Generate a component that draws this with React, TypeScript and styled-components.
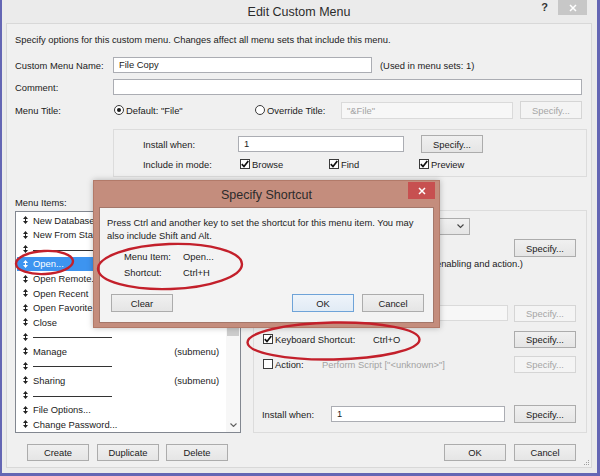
import React from 'react';
import styled, { createGlobalStyle, css } from 'styled-components';

const GlobalStyle = createGlobalStyle`
  * { box-sizing: border-box; }
  html, body { margin: 0; padding: 0; background: #ebebeb; }
  body {
    font-family: "Liberation Sans", Arial, sans-serif;
    font-size: 9.4px;
    color: #1b1b1b;
  }
`;

const Stage = styled.div`
  position: relative;
  width: 600px;
  height: 476px;
  overflow: hidden;
`;

const Window = styled.div`
  width: 600px;
  height: 476px;
  background: #ebebeb;
  border-left: 2px solid #6466b4;
  border-right: 3px solid #6466b4;
  border-bottom: 3px solid #6466b4;
  padding: 0 5px 5px 4px;
  display: flex;
  flex-direction: column;
`;

const TitleBar = styled.div`
  height: 23px;
  flex: none;
  display: grid;
  grid-template-columns: 1fr auto 1fr;
  align-items: start;
`;

const TitleText = styled.div<{ $h: number }>`
  grid-column: 2;
  font-size: 12.5px;
  line-height: ${p => p.$h}px;
  color: #2b2b2b;
  white-space: nowrap;
`;

const Caption = styled.div<{ $mr: number; $mt: number }>`
  justify-self: end;
  display: flex;
  align-items: flex-start;
  margin-right: ${p => p.$mr}px;
  margin-top: ${p => p.$mt}px;
`;

const HelpGlyph = styled.span`
  font-weight: bold;
  font-size: 11px;
  line-height: 14px;
  color: #333;
  margin-right: 10px;
`;

const CloseBox = styled.div<{ $w: number; $h: number; $bg: string }>`
  width: ${p => p.$w}px;
  height: ${p => p.$h}px;
  background: ${p => p.$bg};
  display: flex;
  align-items: center;
  justify-content: center;
`;

const Client = styled.div`
  flex: 1;
  position: relative;
  background: #f0f0f0;
  border: 1px solid #d8d8d8;
  padding: 9px 4px 0 8px;
  display: flex;
  flex-direction: column;
`;

const Intro = styled.div`
  line-height: 13px;
  white-space: nowrap;
`;

const FormGrid = styled.div`
  margin-top: 11px;
  display: grid;
  grid-template-columns: 98px 1fr;
  row-gap: 6px;
  align-items: center;
`;

const FieldLabel = styled.div<{ $w?: number }>`
  line-height: 13px;
  white-space: nowrap;
  ${p => p.$w && css`width: ${p.$w}px; flex: none;`}
`;

const FieldRow = styled.div`
  display: flex;
  align-items: center;
  margin-right: 5px;
`;

const Note = styled.span`
  margin-left: 8px;
  white-space: nowrap;
`;

const TextBox = styled.div<{ $w?: number; $h?: number; $disabled?: boolean; $mr?: number }>`
  height: ${p => p.$h ?? 16}px;
  ${p => (p.$w ? css`width: ${p.$w}px; flex: none;` : css`flex: 1;`)}
  margin-right: ${p => p.$mr ?? 0}px;
  background: ${p => (p.$disabled ? '#f7f7f7' : '#fff')};
  border: 1px solid ${p => (p.$disabled ? '#dadada' : '#abadb3')};
  color: ${p => (p.$disabled ? '#a3a3a3' : '#1b1b1b')};
  padding: 0 5px;
  line-height: ${p => (p.$h ?? 16) - 2}px;
  white-space: nowrap;
  overflow: hidden;
`;

const Btn = styled.button<{ $h?: number; $disabled?: boolean; $default?: boolean; $ml?: number }>`
  font: inherit;
  width: 62px;
  height: ${p => p.$h ?? 18}px;
  flex: none;
  margin: 0 0 0 ${p => p.$ml ?? 0}px;
  padding: 0;
  display: flex;
  align-items: center;
  justify-content: center;
  border: 1px solid #acacac;
  background: linear-gradient(#f0f0f0, #e5e5e5);
  color: #1b1b1b;
  ${p =>
    p.$disabled &&
    css`
      border-color: #d5d5d5;
      background: #f4f4f4;
      color: #a6a6a6;
    `}
  ${p =>
    p.$default &&
    css`
      border-color: #6ea3d8;
      background: linear-gradient(#eef4fa, #e1ebf5);
    `}
`;

const RadioOption = styled.div<{ $w?: number }>`
  display: flex;
  align-items: center;
  gap: 2px;
  white-space: nowrap;
  ${p => p.$w && css`width: ${p.$w}px; flex: none;`}
`;

const RadioDot = styled.span<{ $on?: boolean }>`
  width: 10px;
  height: 10px;
  margin-left: 1px;
  border-radius: 50%;
  border: 1px solid #3a3a3a;
  background: #fff;
  flex: none;
  display: flex;
  align-items: center;
  justify-content: center;
  ${p =>
    p.$on &&
    css`
      &::after {
        content: '';
        width: 4px;
        height: 4px;
        border-radius: 50%;
        background: #1b1b1b;
      }
    `}
`;

const CheckBoxBox = styled.span`
  width: 10px;
  height: 10px;
  border: 1px solid #3a3a3a;
  background: #fff;
  flex: none;
  display: flex;
  align-items: center;
  justify-content: center;
`;

const CheckOption = styled.div<{ $w?: number; $ml?: number }>`
  display: flex;
  align-items: center;
  gap: 2px;
  white-space: nowrap;
  margin-left: ${p => p.$ml ?? 0}px;
  ${p => p.$w && css`width: ${p.$w}px; flex: none;`}
`;

const GroupBox = styled.div`
  grid-column: 2;
  margin-top: 4px;
  border: 1px solid #dcdcdc;
  padding: 5px 4px 5px 29px;
`;

const GroupRow = styled.div<{ $mt?: number; $h: number }>`
  display: flex;
  align-items: center;
  height: ${p => p.$h}px;
  margin-top: ${p => p.$mt ?? 0}px;
`;

const Lower = styled.div`
  margin-top: 19px;
  display: grid;
  grid-template-columns: 226px 334px;
  grid-template-rows: 13px 222px;
  column-gap: 12px;
  row-gap: 2px;
`;

const ListBox = styled.div`
  grid-column: 1;
  grid-row: 2;
  border: 1px solid #828790;
  background: #fff;
  display: flex;
`;

const ListItems = styled.div`
  flex: 1;
  padding-top: 1px;
  overflow: hidden;
`;

const ListItem = styled.div<{ $selected?: boolean }>`
  height: 14.57px;
  margin-left: 1px;
  padding: 0 7px 0 6px;
  display: flex;
  align-items: center;
  white-space: nowrap;
  ${p =>
    p.$selected &&
    css`
      background: #3d94f0;
      color: #fff;
    `}
`;

const ItemName = styled.span`
  flex: 1;
  margin-left: 5px;
`;

const SepLine = styled.span`
  width: 79px;
  height: 1px;
  margin-left: 5px;
  margin-top: 2px;
  background: #333;
`;

const ScrollBar = styled.div`
  width: 14px;
  flex: none;
  background: #f7f7f7;
  display: flex;
  flex-direction: column;
  align-items: center;
`;

const ScrollArrow = styled.div`
  height: 14px;
  width: 14px;
  display: flex;
  align-items: center;
  justify-content: center;
`;

const Thumb = styled.div`
  margin-top: 40px;
  width: 12px;
  height: 70px;
  background: #cdcdcd;
`;

const ScrollFill = styled.div`
  flex: 1;
`;

const Panel = styled.div`
  grid-column: 2;
  grid-row: 2;
  margin-top: -1px;
  border: 1px solid #dcdcdc;
  padding: 7px 10px 8px 8px;
  display: flex;
  flex-direction: column;
`;

const PanelRow = styled.div<{ $mt: number; $h: number }>`
  display: flex;
  align-items: center;
  height: ${p => p.$h}px;
  margin-top: ${p => p.$mt}px;
  white-space: nowrap;
`;

const Spacer = styled.div`
  flex: 1;
`;

const Muted = styled.span`
  color: #a3a3a3;
`;

const ComboBox = styled.div<{ $w: number }>`
  width: ${p => p.$w}px;
  height: 17px;
  border: 1px solid #acacac;
  background: linear-gradient(#f0f0f0, #e5e5e5);
  padding: 0 5px;
  display: flex;
  align-items: center;
  justify-content: flex-end;
`;

const PanelNote = styled.div<{ $pl: number }>`
  line-height: 13px;
  padding-left: ${p => p.$pl}px;
  white-space: nowrap;
`;

const ButtonBar = styled.div`
  margin-top: 11px;
  height: 17px;
  display: flex;
  align-items: center;
  padding: 0 11px 0 12px;
`;

const Grip = styled.svg`
  position: absolute;
  right: 1px;
  bottom: 1px;
`;

/* ---------- Specify Shortcut dialog (floats over the window) ---------- */

const Dialog = styled.div`
  position: absolute;
  left: 93px;
  top: 180px;
  width: 347px;
  height: 148px;
  background: #c48d7d;
  border: 1px solid #b27a69;
  padding: 0 5px 4px 5px;
  display: flex;
  flex-direction: column;
  box-shadow: 0 0 6px rgba(0, 0, 0, 0.25);
`;

const DialogTitleBar = styled.div`
  height: 26px;
  flex: none;
  display: grid;
  grid-template-columns: 1fr auto 1fr;
  align-items: start;
`;

const DialogBody = styled.div`
  flex: 1;
  background: #f3f3f3;
  border: 1px solid #a4776a;
  padding: 8px 9px 0 7px;
  display: flex;
  flex-direction: column;
`;

const BodyText = styled.div`
  line-height: 13px;
  white-space: nowrap;
`;

const InfoGrid = styled.div`
  margin: 6px 0 0 17px;
  display: grid;
  grid-template-columns: 59px auto;
  grid-auto-rows: 16px;
  align-items: center;
`;

const DialogButtons = styled.div`
  margin-top: 14px;
  display: flex;
  align-items: center;
  padding-left: 4px;
`;

const Marks = styled.svg`
  position: absolute;
  left: 0;
  top: 0;
  pointer-events: none;
`;

/* ---------- small drawings ---------- */

const Check = ({ on }: { on?: boolean }) => (
  <CheckBoxBox>
    {on && (
      <svg width="8" height="8" viewBox="0 0 8 8">
        <path d="M0.8 4.1 L3 6.5 L7.3 1" fill="none" stroke="#111" strokeWidth="1.7" />
      </svg>
    )}
  </CheckBoxBox>
);

const DragHandle = ({ color }: { color: string }) => (
  <svg width="5" height="8" viewBox="0 0 5 8">
    <path d="M2.5 0 L5 3 H0 Z M0 5 H5 L2.5 8 Z" fill={color} />
    <rect x="2" y="2" width="1" height="4" fill={color} />
  </svg>
);

const Chevron = ({ size = 7, color = '#444' }: { size?: number; color?: string }) => (
  <svg width={size} height={size * 0.6} viewBox="0 0 7 4.2">
    <path d="M0.5 0.5 L3.5 3.5 L6.5 0.5" fill="none" stroke={color} strokeWidth="1.1" />
  </svg>
);

const CrossGlyph = () => (
  <svg width="8" height="8" viewBox="0 0 8 8">
    <path d="M1 1 L7 7 M7 1 L1 7" stroke="#fff" strokeWidth="1.5" />
  </svg>
);

type MenuRow = { name?: string; sub?: boolean; sep?: boolean; selected?: boolean };

const menuRows: MenuRow[] = [
  { name: 'New Database...' },
  { name: 'New From Starter Solution...' },
  { sep: true },
  { name: 'Open...', selected: true },
  { name: 'Open Remote...' },
  { name: 'Open Recent', sub: true },
  { name: 'Open Favorite', sub: true },
  { name: 'Close' },
  { sep: true },
  { name: 'Manage', sub: true },
  { sep: true },
  { name: 'Sharing', sub: true },
  { sep: true },
  { name: 'File Options...' },
  { name: 'Change Password...' },
];

export default function App() {
  return (
    <Stage>
      <GlobalStyle />
      <Window>
        <TitleBar>
          <TitleText $h={24}>Edit Custom Menu</TitleText>
          <Caption $mr={5} $mt={0}>
            <HelpGlyph>?</HelpGlyph>
            <CloseBox $w={29} $h={15} $bg="#c7c7c7">
              <CrossGlyph />
            </CloseBox>
          </Caption>
        </TitleBar>

        <Client>
          <Intro>
            Specify options for this custom menu. Changes affect all menu sets that include this menu.
          </Intro>

          <FormGrid>
            <FieldLabel>Custom Menu Name:</FieldLabel>
            <FieldRow>
              <TextBox $w={259}>File Copy</TextBox>
              <Note>(Used in menu sets: 1)</Note>
            </FieldRow>

            <FieldLabel>Comment:</FieldLabel>
            <FieldRow>
              <TextBox />
            </FieldRow>

            <FieldLabel>Menu Title:</FieldLabel>
            <FieldRow>
              <RadioOption $w={141}>
                <RadioDot $on />
                Default: "File"
              </RadioOption>
              <RadioOption $w={87}>
                <RadioDot />
                Override Title:
              </RadioOption>
              <TextBox $w={172} $h={17} $disabled $mr={7}>
                "&amp;File"
              </TextBox>
              <Btn $disabled $h={18}>
                Specify...
              </Btn>
            </FieldRow>

            <GroupBox>
              <GroupRow $h={18}>
                <FieldLabel $w={95}>Install when:</FieldLabel>
                <TextBox $w={166} $mr={17}>
                  1
                </TextBox>
                <Btn>Specify...</Btn>
              </GroupRow>
              <GroupRow $h={14} $mt={4}>
                <FieldLabel $w={97}>Include in mode:</FieldLabel>
                <CheckOption $w={89}>
                  <Check on />
                  Browse
                </CheckOption>
                <CheckOption $w={90}>
                  <Check on />
                  Find
                </CheckOption>
                <CheckOption>
                  <Check on />
                  Preview
                </CheckOption>
              </GroupRow>
            </GroupBox>
          </FormGrid>

          <Lower>
            <FieldLabel>Menu Items:</FieldLabel>
            <ListBox>
              <ListItems>
                {menuRows.map((row, i) => (
                  <ListItem key={i} $selected={row.selected}>
                    <DragHandle color={row.selected ? '#fff' : '#222'} />
                    {row.sep ? <SepLine /> : <ItemName>{row.name}</ItemName>}
                    {row.sub && <span>(submenu)</span>}
                  </ListItem>
                ))}
              </ListItems>
              <ScrollBar>
                <ScrollArrow>
                  <svg width="7" height="4.2" viewBox="0 0 7 4.2">
                    <path d="M0.5 3.7 L3.5 0.7 L6.5 3.7" fill="none" stroke="#606060" strokeWidth="1.1" />
                  </svg>
                </ScrollArrow>
                <Thumb />
                <ScrollFill />
                <ScrollArrow>
                  <Chevron color="#606060" />
                </ScrollArrow>
              </ScrollBar>
            </ListBox>

            <Panel>
              {/* rows whose left part sits under the Specify Shortcut dialog */}
              <PanelRow $mt={0} $h={17}>
                <FieldLabel $w={69} />
                <ComboBox $w={139}>
                  <Chevron />
                </ComboBox>
              </PanelRow>
              <PanelRow $mt={4} $h={18}>
                <Spacer />
                <Btn>Specify...</Btn>
              </PanelRow>
              <PanelNote $pl={27}>(Command determines item name, enabling and action.)</PanelNote>
              <PanelRow $mt={34.5} $h={17}>
                <CheckOption $w={68} $ml={1}>
                  <Check />
                </CheckOption>
                <TextBox $disabled $mr={6} />
                <Btn $disabled $h={17}>
                  Specify...
                </Btn>
              </PanelRow>
              <PanelRow $mt={9} $h={17}>
                <CheckOption $w={110} $ml={1}>
                  <Check on />
                  Keyboard Shortcut:
                </CheckOption>
                Ctrl+O
                <Spacer />
                <Btn $h={17}>Specify...</Btn>
              </PanelRow>
              <PanelRow $mt={8} $h={17}>
                <CheckOption $w={59} $ml={1}>
                  <Check />
                  Action:
                </CheckOption>
                <Muted>Perform Script ["&lt;unknown&gt;"]</Muted>
                <Spacer />
                <Btn $disabled $h={17}>
                  Specify...
                </Btn>
              </PanelRow>
              <PanelRow $mt={33} $h={17}>
                <FieldLabel $w={69}>Install when:</FieldLabel>
                <TextBox $mr={9}>1</TextBox>
                <Btn $h={18}>Specify...</Btn>
              </PanelRow>
            </Panel>
          </Lower>

          <ButtonBar>
            <Btn $h={17}>Create</Btn>
            <Btn $h={17} $ml={8}>
              Duplicate
            </Btn>
            <Btn $h={17} $ml={7}>
              Delete
            </Btn>
            <Spacer />
            <Btn $h={17}>OK</Btn>
            <Btn $h={17} $ml={8}>
              Cancel
            </Btn>
          </ButtonBar>

          <Grip width="6" height="6" viewBox="0 0 6 6">
            <rect x="4" y="0" width="1" height="1" fill="#a0a0a0" />
            <rect x="2" y="2" width="1" height="1" fill="#a0a0a0" />
            <rect x="4" y="2" width="1" height="1" fill="#a0a0a0" />
            <rect x="0" y="4" width="1" height="1" fill="#a0a0a0" />
            <rect x="2" y="4" width="1" height="1" fill="#a0a0a0" />
            <rect x="4" y="4" width="1" height="1" fill="#a0a0a0" />
          </Grip>
        </Client>
      </Window>

      <Dialog>
        <DialogTitleBar>
          <TitleText $h={29}>Specify Shortcut</TitleText>
          <Caption $mr={-1} $mt={1}>
            <CloseBox $w={27} $h={17} $bg="#c75050">
              <CrossGlyph />
            </CloseBox>
          </Caption>
        </DialogTitleBar>
        <DialogBody>
          <BodyText>
            Press Ctrl and another key to set the shortcut for this menu item. You may
            <br />
            also include Shift and Alt.
          </BodyText>
          <InfoGrid>
            <span>Menu Item:</span>
            <span>Open...</span>
            <span>Shortcut:</span>
            <span>Ctrl+H</span>
          </InfoGrid>
          <DialogButtons>
            <Btn>Clear</Btn>
            <Spacer />
            <Btn $default>OK</Btn>
            <Btn $ml={8}>Cancel</Btn>
          </DialogButtons>
        </DialogBody>
      </Dialog>

      <Marks width="600" height="476" viewBox="0 0 600 476">
        <g fill="none" stroke="#c3202b" strokeWidth="2.4">
          <ellipse cx="44.5" cy="262.5" rx="28.5" ry="11.5" transform="rotate(-3 44.5 262.5)" />
          <ellipse cx="170" cy="266.5" rx="72" ry="22.5" transform="rotate(-2 170 266.5)" />
          <ellipse cx="333.5" cy="341" rx="86" ry="18.5" transform="rotate(-1 333.5 341)" />
        </g>
      </Marks>
    </Stage>
  );
}
